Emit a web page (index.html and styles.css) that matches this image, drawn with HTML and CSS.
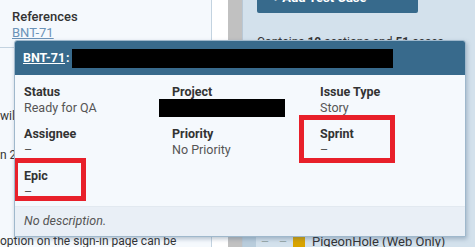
FILE: index.html
```html
<!DOCTYPE html>
<html>
<head>
<meta charset="utf-8">
<link rel="stylesheet" href="styles.css">
</head>
<body>
<div class="page">
  <div class="left">
    <div class="refs">
      <div class="refs-title">References</div>
      <a class="refs-link" href="#">BNT-71</a>
    </div>
    <div class="left-body">
      <p class="l1">will be able</p>
      <p class="l2">n 2</p>
      <p class="l3">option on the sign-in page can be</p>
    </div>
  </div>
  <div class="gutter"><div class="gutter-white"></div><div class="gutter-bar"></div></div>
  <div class="right">
    <div class="add-btn">+ Add Test Case</div>
    <div class="contains">Contains <b>10</b> sections and <b>51</b> cases.</div>
    <div class="tree-row">
      <span class="tree-box"></span><span class="tree-dash">–</span><span class="tree-dash">–</span>
      <span class="folder"></span><span class="tree-text">PigeonHole (Web Only)</span>
    </div>
  </div>

  <div class="popup">
    <div class="popup-head">
      <a class="key" href="#">BNT-71</a><span class="colon">:</span><span class="redact head-redact"></span>
    </div>
    <div class="popup-body">
      <div class="field"><div class="label">Status</div><div class="value">Ready for QA</div></div>
      <div class="field"><div class="label">Project</div><div class="value"><span class="redact proj-redact"></span></div></div>
      <div class="field"><div class="label">Issue Type</div><div class="value">Story</div></div>
      <div class="field"><div class="label">Assignee</div><div class="value">–</div></div>
      <div class="field"><div class="label">Priority</div><div class="value">No Priority</div></div>
      <div class="field sprint"><div class="label">Sprint</div><div class="value">–</div><span class="mark sprint-mark"></span></div>
      <div class="field epic"><div class="label">Epic</div><div class="value">–</div><span class="mark epic-mark"></span></div>
    </div>
    <div class="popup-foot">No description.</div>
  </div>
</div>
</body>
</html>
```

FILE: styles.css
```css
html, body {
  margin: 0;
  padding: 0;
}
body {
  font-family: Roboto, "Liberation Sans", sans-serif;
  font-size: 12px;
  color: #333;
  width: 475px;
  height: 247px;
  overflow: hidden;
}
.page {
  position: relative;
  display: flex;
  width: 475px;
  height: 247px;
  overflow: hidden;
}
.left {
  width: 211px;
  flex: none;
  background: #f5f9fd;
  border-right: 1px solid #c3d3e0;
  overflow: hidden;
}
.refs {
  padding: 9px 12px 0;
  height: 38px;
  border-bottom: 1px solid #c3d3e0;
}
.refs-title {
  font-size: 13px;
  font-weight: 500;
  color: #333;
  line-height: 15px;
}
.refs-link {
  display: inline-block;
  font-size: 13px;
  color: #6b93b8;
  line-height: 17px;
  text-decoration: underline;
}
.left-body p {
  margin: 0;
  font-size: 12px;
  color: #333;
  white-space: nowrap;
}
.l1 { margin-top: 61px !important; }
.l2 { margin-top: 25px !important; }
.l3 { margin-top: 72px !important; }
.gutter {
  display: flex;
  flex: none;
}
.gutter-white {
  width: 16px;
  background: #ffffff;
}
.gutter-bar {
  width: 14px;
  background: #c1c1c1;
  border-right: 1px solid #b8c8d6;
}
.right {
  flex: 1;
  background: #d3e1ec;
  padding-left: 14px;
}
.add-btn {
  margin-top: -8px;
  width: 161px;
  height: 21px;
  background: #376a8c;
  border-radius: 2px;
  color: #fff;
  font-weight: 700;
  font-size: 13px;
  line-height: 11px;
  padding-left: 15px;
  box-sizing: border-box;
}
.contains {
  margin-top: 22px;
  font-size: 12px;
  color: #333;
}
.tree-row {
  margin-top: 185px;
  display: flex;
  align-items: center;
  margin-left: -14px;
  font-size: 13px;
}
.tree-box { width: 13px; height: 12px; background: #b9cddc; flex: none; }
.tree-dash { color: #9aa; width: 18px; text-align: center; flex: none; margin-left: 0; }
.folder { width: 12px; height: 12px; background: #d9a400; margin-left: 1px; flex: none; }
.tree-text { margin-left: 7px; white-space: nowrap; }

.popup {
  position: absolute;
  left: 14px;
  top: 40px;
  width: 452px;
  height: 197px;
  box-sizing: border-box;
  border: 1px solid #9fb8cc;
  border-radius: 3px 3px 0 0;
  background: #f5f9fd;
  box-shadow: 1px 2px 4px rgba(60, 90, 120, 0.35);
  display: flex;
  flex-direction: column;
  overflow: hidden;
}
.popup-head {
  height: 35px;
  flex: none;
  background: #386a8c;
  display: flex;
  align-items: center;
  padding-left: 9px;
  box-sizing: border-box;
  margin: -1px -1px 0;
}
.key {
  color: #fff;
  font-weight: 700;
  font-size: 12.5px;
  text-decoration: underline;
}
.colon {
  color: #fff;
  font-weight: 700;
  font-size: 12.5px;
  margin-left: 1px;
}
.redact {
  display: inline-block;
  background: #000;
}
.head-redact {
  width: 321px;
  height: 19px;
  margin-left: 2px;
  margin-top: 2px;
}
.popup-body {
  flex: 1;
  min-height: 0;
  overflow: hidden;
  display: grid;
  grid-template-columns: 148px 148px 1fr;
  grid-auto-rows: 42px;
  padding: 9px 9px 0;
  align-content: start;
}
.field {
  position: relative;
}
.label {
  font-weight: 700;
  font-size: 12.5px;
  line-height: 16px;
  color: #333;
}
.value {
  font-size: 12.5px;
  line-height: 16px;
  color: #555;
}
.proj-redact {
  width: 126px;
  height: 18px;
  margin-left: -13px;
  margin-top: -1px;
  vertical-align: top;
}
.mark {
  position: absolute;
  border: 5px solid #e8202a;
  box-sizing: border-box;
  pointer-events: none;
}
.sprint-mark {
  left: -21px;
  top: -11px;
  width: 96px;
  height: 48px;
}
.epic-mark {
  left: -11px;
  top: -10px;
  width: 73px;
  height: 43px;
}
.popup-foot {
  flex: none;
  height: 29px;
  background: #e9eff6;
  border-top: 1px solid #e2e9f0;
  font-style: italic;
  color: #555;
  font-size: 12.5px;
  line-height: 27px;
  padding-left: 9px;
}
```
